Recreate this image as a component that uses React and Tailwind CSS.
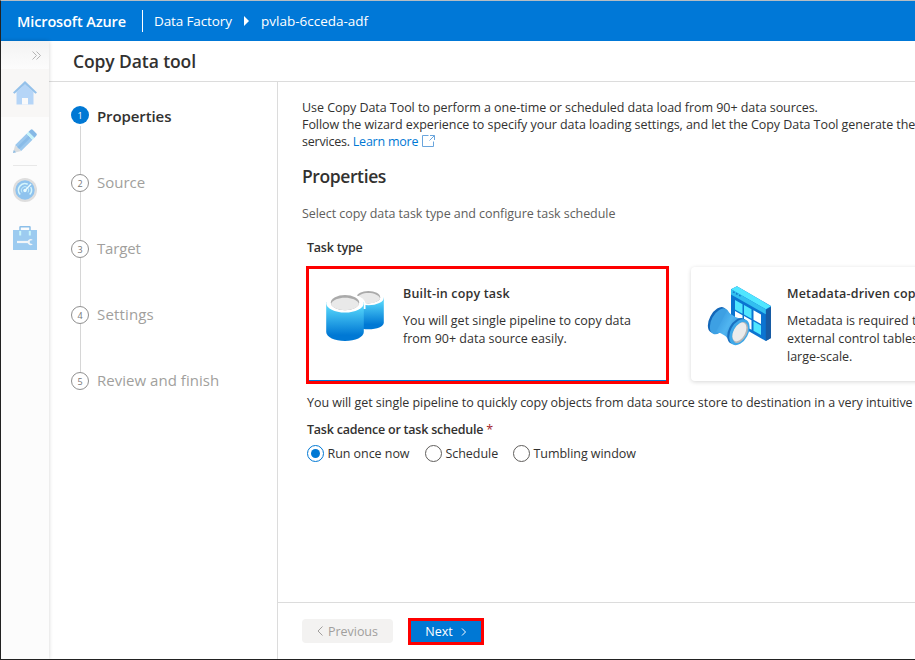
import React from "react";

function HomeIcon() {
  return (
    <svg width="24" height="24" viewBox="0 0 24 24">
      <path d="M3.5 11 12 3l8.500 8v12.500h-17z" fill="#b5d5f7" />
      <path d="M0 11.500 12 0l12 11.500-1.500 1.300L12 3.200 1.500 12.800z" fill="#94c1ea" />
      <path d="M9 23.500V17h6v6.500z" fill="#fafafa" />
    </svg>
  );
}

function PencilIcon() {
  return (
    <svg width="24" height="24" viewBox="0 0 24 24">
      <path d="M0 24 2.200 16l6 6z" fill="#d9dde0" />
      <path d="M0 24l.8-3 2.300 2.300z" fill="#8fbde5" />
      <path d="M2.200 16 13.500 4.800l6 6L8.200 22z" fill="#9bc8ee" />
      <path d="M4.200 18 15.500 6.800l2 2L6.200 20z" fill="#8abce8" />
      <path d="M13.500 4.800l2-2 6 6-2 2z" fill="#c5f4fa" />
      <path d="M15.500 2.800 17.700.7Q18.700 0 19.700.7l3.700 3.700q.9 1 0 2L21.500 8.800z" fill="#85b9e6" />
    </svg>
  );
}

function GaugeIcon() {
  return (
    <svg width="24" height="24" viewBox="0 0 24 24" fill="none">
      <circle cx="12" cy="12" r="12" fill="#dedede" />
      <circle cx="12" cy="12" r="9.700" fill="#8fc3ee" />
      <path d="M7.200 16.500a6.500 6.500 0 0 1 7.500-10.300M17.700 9a6.500 6.500 0 0 1-1 7.600" stroke="#d6f6fc" strokeWidth="1.500" />
      <path d="M9 14.500a3.700 3.700 0 1 1 6 0" stroke="#c5eefa" strokeWidth="1" />
      <path d="M12 12.500 18 6" stroke="#e8fbff" strokeWidth="1.400" />
      <circle cx="12" cy="12.500" r="1.700" fill="#e8fbff" />
    </svg>
  );
}

function ToolboxIcon() {
  return (
    <svg width="24" height="24" viewBox="0 0 24 24" fill="none">
      <path d="M7 5V1.200Q7 .8 7.500.8h9q.5 0 .5.400V5" stroke="#8cbfe9" strokeWidth="1.500" />
      <path d="M0 4h24v20H0z" fill="#9ccbf0" />
      <path d="M7.200 5v4.500M16.800 5v4.500" stroke="#c8f5fb" strokeWidth="2" />
      <path d="M4 16h12" stroke="#f1f5f8" strokeWidth="2.200" />
      <path d="M19.800 14a3 3 0 1 0 0 4.200l-3-.9v-2.500z" fill="#f1f5f8" />
    </svg>
  );
}

function CylindersIcon() {
  return (
    <svg width="60" height="52" viewBox="326 290 60 52" className="block">
      <defs>
        <linearGradient id="cyl" x1="0" y1="0" x2="0" y2="1">
          <stop offset="0.150" stopColor="#50d0f8" />
          <stop offset="0.850" stopColor="#0078d4" />
        </linearGradient>
      </defs>
      <path d="M353 297.500v25c0 4 7 6.800 15.500 6.800s15.300-2.800 15.300-6.800v-25z" fill="url(#cyl)" />
      <ellipse cx="368.400" cy="297.700" rx="15.400" ry="7.600" fill="#fff" />
      <ellipse cx="368.400" cy="297.200" rx="11.800" ry="6.200" fill="#aaa" />
      <path d="M356.700 298.200c1.500-3.200 6-5.200 11.700-5.200s10.200 2 11.700 5.200c-1.500 3.200-6 5.200-11.700 5.200s-10.200-2-11.700-5.200z" fill="#e9e9e9" />
      <path d="M345 294c12 0 20.500 4 20.500 10v5H345z" fill="#fff" />
      <path d="M326.200 302v30c0 5 8.400 9 18.800 9s18.800-4 18.800-9v-30z" fill="url(#cyl)" />
      <ellipse cx="345" cy="303" rx="18.800" ry="9.600" fill="#fff" />
      <ellipse cx="345" cy="302.600" rx="14.200" ry="7.600" fill="#aaa" />
      <path d="M331 304c1.800-4 7.300-6.200 14-6.200s12.200 2.200 14 6.200c-1.800 4-7.300 6.200-14 6.200s-12.200-2.200-14-6.200z" fill="#e9e9e9" />
    </svg>
  );
}

function MetadataIcon() {
  return (
    <svg width="66" height="62" viewBox="707 284 66 62" className="block">
      <defs>
        <linearGradient id="lens" x1="0" y1="0" x2="1" y2="0.600">
          <stop offset="0" stopColor="#2f8fdb" />
          <stop offset="0.500" stopColor="#50b5f0" />
          <stop offset="1" stopColor="#2a84d2" />
        </linearGradient>
      </defs>
      <path d="M731 288.300 737 285.300 771 305v32l-5.200 3L731 320z" fill="#0b74d1" />
      <path d="M765.800 309 771 306v31l-5.200 3z" fill="#175ba3" />
      <path d="M731 288.300 737 285.300 771 305.200l-5.200 3z" fill="#50e6ff" />
      <path d="M731 288.300l34.800 20v5L731 293.500z" fill="#32bff0" />
      <path d="M733 290.800l1.600.9M736 292.500l1.600.9M739 294.200l1.600.9" stroke="#137bcb" strokeWidth="1.500" />
      <g transform="matrix(1 .56 0 1 735 297)">
        <path d="M0 2h7.500v9.500H0zM9 2h7.500v9.500H9z" fill="#50e6ff" />
        <path d="M18.500 2H26v9.500h-7.500z" fill="#fff" />
        <path d="M0 13h7.500v9.500H0zM9 13h7.500v9.500H9z" fill="#fff" />
        <path d="M18.500 13H26v9.500h-7.500z" fill="#50e6ff" />
      </g>
      <ellipse cx="717.500" cy="319" rx="8" ry="14" transform="rotate(28 717.500 319)" fill="#1367b8" />
      <ellipse cx="719.500" cy="320.300" rx="8" ry="14" transform="rotate(28 719.500 320.300)" fill="#3da0e3" />
      <path d="M727 309.500q7 8 18 9l-14 24q-5-10-15-11.500z" fill="url(#lens)" />
      <ellipse cx="737.300" cy="330" rx="8.600" ry="14" transform="rotate(28 737.300 330)" fill="#1a70c0" />
      <ellipse cx="739.400" cy="331.200" rx="8.800" ry="14" transform="rotate(28 739.400 331.200)" fill="#3fa8e8" />
      <ellipse cx="740.200" cy="331.500" rx="6.600" ry="11.200" transform="rotate(28 740.200 331.500)" fill="#b3b6b9" />
      <ellipse cx="739.400" cy="331" rx="5.800" ry="10.200" transform="rotate(28 739.400 331)" fill="#ececec" />
    </svg>
  );
}

function Rail() {
  return (
    <nav className="relative z-10 flex w-12 shrink-0 flex-col items-center bg-[#fcfcfc] shadow-[0_0_4px_rgba(0,0,0,0.18)]">
      <div className="flex h-7 w-full shrink-0 items-center justify-end bg-linear-to-b from-[#f3f3f3] to-[#fcfcfc] pr-2">
        <svg width="9" height="9" viewBox="0 0 9 9" fill="none" stroke="#b5b5b5">
          <path d="M.5.500l4 4-4 4M4.500.500l4 4-4 4" />
        </svg>
      </div>
      <div className="flex h-12 w-full items-center justify-center bg-[#f8f7f6]"><HomeIcon /></div>
      <div className="flex h-12 items-center"><PencilIcon /></div>
      <div className="h-px w-6 bg-[#e8e8e8]" />
      <div className="flex h-12 items-center"><GaugeIcon /></div>
      <div className="flex h-12 items-center"><ToolboxIcon /></div>
    </nav>
  );
}

const steps = [
  ["Source", "tracking-normal"],
  ["Target", "tracking-[-0.15px]"],
  ["Settings", "tracking-[0.15px]"],
  ["Review and finish", "tracking-[0.03px]"],
];

function Steps() {
  return (
    <aside className="flex w-[229px] shrink-0 flex-col border-r border-[#dcdcdc] pl-[22px] pt-6 text-[15px]">
      <div className="flex h-[18px] items-center gap-2">
        <span className="flex size-[18px] items-center justify-center rounded-full bg-[#0078d4] text-[9px] text-white">1</span>
        <span className="pt-px font-semibold leading-[18px] tracking-[-0.1px] text-[#323130]">Properties</span>
      </div>
      <div className="ml-[9px] mt-0.5 h-12 w-px bg-[#d6d6d6]" />
      {steps.map(([label, tracking], i) => (
        <div key={label}>
          {i > 0 && <div className="ml-[9px] h-12 w-px bg-[#d6d6d6]" />}
          <div className="flex h-[18px] items-center gap-2">
            <span className="flex size-[18px] items-center justify-center rounded-full border border-[#8f8f8f] text-[9px] text-[#777]">{i + 2}</span>
            <span className={`pb-0.5 leading-[18px] text-[#a19f9d] ${tracking}`}>{label}</span>
          </div>
        </div>
      ))}
    </aside>
  );
}

function Radio({ label, checked, className }) {
  return (
    <label className={`flex items-center gap-[3.500px] tracking-[-0.050px] ${className}`}>
      <span className={`flex size-[17px] shrink-0 items-center justify-center rounded-full border ${checked ? "border-[#0078d4]" : "border-[#605e5c]"}`}>
        {checked && <span className="size-[9px] rounded-full bg-[#0078d4]" />}
      </span>
      <span>{label}</span>
    </label>
  );
}

function Content() {
  return (
    <section className="flex min-w-0 flex-1 flex-col overflow-hidden whitespace-nowrap">
      <div className="flex flex-1 flex-col pl-6 pt-[17px]">
        <div className="h-[17px] tracking-[-0.050px]">Use Copy Data Tool to perform a one-time or scheduled data load from 90+ data sources.</div>
        <div className="h-[17px] tracking-[-0.060px]">Follow the wizard experience to specify your data loading settings, and let the Copy Data Tool generate the</div>
        <div className="flex h-[17px] tracking-[-0.220px]">
          services.&nbsp;<a className="text-[#0078d4]">Learn more</a>
          <svg className="ml-1 mt-0.5" width="13" height="13" viewBox="0 0 13 13" fill="none" stroke="#6aa5dc">
            <path d="M6.500.500h-6v11h11v-5M8 .5h4.500V5M12.500.500l-5 5" />
          </svg>
        </div>
        <h2 className="mt-[14px] h-6 text-[17.500px] font-semibold leading-6 tracking-[-0.400px] text-[#323130]">Properties</h2>
        <p className="mt-[17px] h-[17px] tracking-[-0.060px] text-[#605e5c]">Select copy data task type and configure task schedule</p>
        <div className="mt-[17px] h-[17px] pl-[5px] font-semibold tracking-[-0.220px]">Task type</div>
        <div className="mt-[10px] flex h-[118px] gap-[22px] pl-1">
          <div className="w-[363px] shrink-0 border-[3px] border-[#fe0000]">
            <div className="flex h-full border-b border-[#0078d4] pl-[17px] pt-[21px]">
              <CylindersIcon />
              <div className="-mt-[5px] ml-[17px]">
                <div className="h-[18px] font-semibold leading-[18px] tracking-[0.170px]">Built-in copy task</div>
                <div className="mt-[9px] leading-[18px]">You will get single pipeline to copy data<br />from 90+ data source easily.</div>
              </div>
            </div>
          </div>
          <div className="mt-px flex h-[114px] w-[363px] shrink-0 rounded-sm bg-white pl-4 pt-[18px] shadow-[0_1px_4px_rgba(0,0,0,0.16)]">
            <MetadataIcon />
            <div className="ml-[14px]">
              <div className="h-[18px] font-semibold leading-[18px] tracking-[0.170px]">Metadata-driven copy task</div>
              <div className="mt-[9px] leading-[18px]">Metadata is required to be stored in<br />external control tables to load data at<br />large-scale.</div>
            </div>
          </div>
        </div>
        <div className="mt-[10px] h-[17px] pl-[5px] tracking-[-0.045px]">You will get single pipeline to quickly copy objects from data source store to destination in a very intuitive</div>
        <div className="mt-[10px] h-[17px] pl-[5px] font-semibold tracking-[-0.220px]">Task cadence or task schedule <span className="font-normal text-[#a4262c]">*</span></div>
        <div className="mt-[6px] flex h-[18px] pl-[5px]">
          <Radio label="Run once now" checked className="w-[118px]" />
          <Radio label="Schedule" className="w-[88px]" />
          <Radio label="Tumbling window" className="" />
        </div>
      </div>
      <footer className="flex h-[57px] shrink-0 items-center border-t border-[#dcdcdc] pl-6 pt-px">
        <button className="mb-px flex h-6 w-[91px] items-center justify-center gap-1 rounded-sm bg-[#f3f2f1] tracking-[-0.050px] text-[#a19f9d]">
          <svg width="7" height="10" viewBox="0 0 7 10" fill="none" stroke="#a19f9d"><path d="M5.500.500 1 5l4.500 4.500" /></svg>
          Previous
        </button>
        <button className="ml-[15px] flex h-[27px] w-[76px] items-center justify-center gap-2 border-[3px] border-[#fe0000] bg-[#0078d4] text-white">
          <span>Next</span>
          <svg width="6" height="8" viewBox="0 0 6 8" fill="none" stroke="white"><path d="M1 .5 4.500 4 1 7.500" /></svg>
        </button>
      </footer>
    </section>
  );
}

export default function App() {
  return (
    <div className="flex h-[660px] w-[915px] flex-col overflow-hidden border-b border-l border-t border-b-[#222] border-l-[#222] border-t-[#b5bdc3] bg-white font-['Open_Sans','Noto_Sans',sans-serif] text-[12.500px] leading-[17px] text-[#323130]">
      <header className="flex h-10 shrink-0 items-center bg-[#0078d7] pl-4 text-[13.500px] text-white">
        <span className="w-[125px] text-[14.500px] font-semibold tracking-[-0.120px]">Microsoft Azure</span>
        <span className="h-[22px] w-px bg-white" />
        <span className="ml-[11px] w-[90px] tracking-[-0.120px]">Data Factory</span>
        <svg width="5" height="10" viewBox="0 0 5 10"><path d="M0 0l5 5-5 5z" fill="white" /></svg>
        <span className="ml-3">pvlab-6cceda-adf</span>
      </header>
      <div className="flex min-h-0 flex-1">
        <Rail />
        <main className="flex min-w-0 flex-1 flex-col">
          <h1 className="flex h-[41px] shrink-0 items-center border-b border-[#dcdcdc] pl-6 text-[17.500px] font-semibold tracking-[-0.100px]">Copy Data tool</h1>
          <div className="flex min-h-0 flex-1">
            <Steps />
            <Content />
          </div>
        </main>
      </div>
    </div>
  );
}
